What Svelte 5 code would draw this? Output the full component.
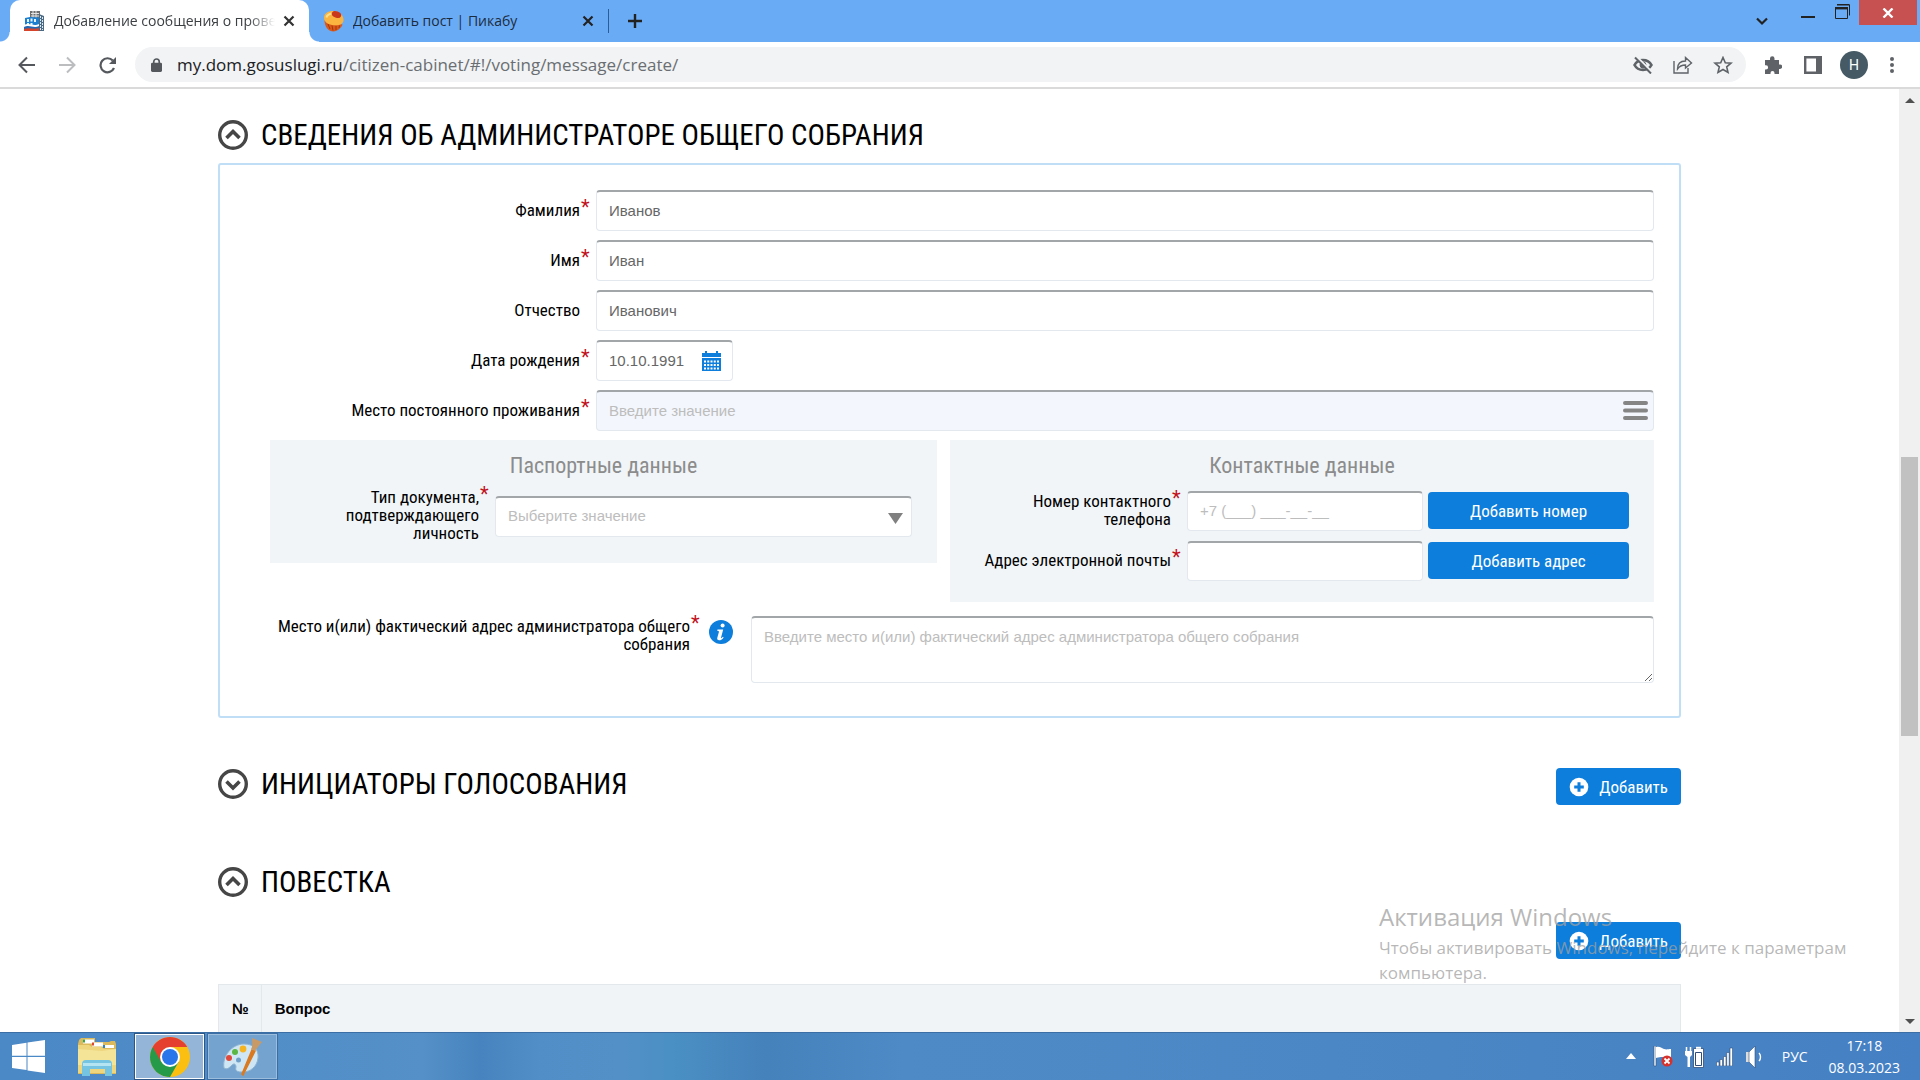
<script>
  const people = [
    { id: 'surname', label: 'Фамилия', value: 'Иванов', required: true },
    { id: 'name', label: 'Имя', value: 'Иван', required: true },
    { id: 'patronymic', label: 'Отчество', value: 'Иванович', required: false }
  ];
</script>

{#snippet toggleIcon(open)}
  <svg width="30" height="30" viewBox="0 0 30 30" fill="none" stroke="#464646">
    <circle cx="15" cy="15" r="13.3" stroke-width="3.4" />
    <path d={open ? 'M8.5 18 15 11.5 21.5 18' : 'M8.5 12.5 15 19 21.5 12.5'} stroke-width="3.6" />
  </svg>
{/snippet}

{#snippet fieldLabel(id, text, required)}
  <label class="label" for={id}>
    <span>{text}</span>
    <span class="star">{required ? '*' : ''}</span>
  </label>
{/snippet}

{#snippet addButton()}
  <button class="btn add">
    <svg width="20" height="20" viewBox="0 0 20 20">
      <circle cx="10" cy="10" r="9.3" fill="#fff" />
      <path d="M10 5.2v9.6M5.2 10h9.6" stroke="#0d7edb" stroke-width="3" />
    </svg>
    Добавить
  </button>
{/snippet}

<div class="screen">
  <header class="tabs">
    <div class="tab active">
      <svg width="22" height="22" viewBox="0 0 22 22">
        <path d="M6 1h10v7H6z" fill="#6f6f6f" />
        <path d="M7 3.500h8M7 6h8M9 1v7M12 1v7" stroke="#e4e4e4" />
        <path d="M15 4l5 2v15h-5z" fill="#4b6a84" />
        <path d="M16.500 6v14M18.500 7v13" stroke="#dce7ee" stroke-dasharray="2 1" />
        <path d="M1 8l5-1 9 .5V18H1z" fill="#1c7fd0" />
        <path d="M3 9h2v3H3zM6.500 8.500h2v3h-2zM10 9h2v3h-2zM3 13h2v2H3zM6.500 13h2v2h-2z" fill="#e8f3fb" />
        <path d="M0 15c6-3 9 2 15-1v4H0z" fill="#fff" />
        <path d="M0 17c6-3 9 2 15-1v3H0z" fill="#2468b2" />
        <path d="M0 19c6-2 9 1 15-1v3H0z" fill="#d6452b" />
      </svg>
      <button class="tab-title faded">Добавление сообщения о проведении</button>
      <button class="icon-btn" aria-label="Закрыть вкладку">
        <svg width="12" height="12" viewBox="0 0 12 12"><path d="M1.5 1.5l9 9M10.5 1.5l-9 9" stroke="#333" stroke-width="2.2" /></svg>
      </button>
    </div>
    <div class="tab">
      <svg width="22" height="22" viewBox="0 0 22 22">
        <path d="M1.500 10c0 7 4 11.500 9 11.500 4-.5 8-3.500 9-7z" fill="#d9591a" />
        <path d="M5 14l2 5M9 15.500l1 5M13 16v4M16.500 15.500l-.5 2.500" stroke="#a83608" />
        <path d="M1 7.500C1 3.500 5 1 10 1c6 0 11 4.500 10.500 9.500-.5 4.500-6 5.500-11.500 4.500-5-1-8-3.500-8-7.500z" fill="#fbb440" />
        <path d="M3.500 7.500c.5-2.500 2.500-3.500 5-4" stroke="#ffe08a" stroke-width="2" fill="none" />
        <ellipse cx="13.500" cy="4.500" rx="4.800" ry="3.200" transform="rotate(20 13.500 4.500)" fill="#c9381c" />
      </svg>
      <button class="tab-title">Добавить пост | Пикабу</button>
      <button class="icon-btn" aria-label="Закрыть вкладку">
        <svg width="12" height="12" viewBox="0 0 12 12"><path d="M1.5 1.5l9 9M10.5 1.5l-9 9" stroke="#222" stroke-width="2.2" /></svg>
      </button>
    </div>
    <span class="tab-sep"></span>
    <button class="icon-btn new-tab" aria-label="Новая вкладка">
      <svg width="16" height="16" viewBox="0 0 16 16"><path d="M8 1v14M1 8h14" stroke="#222" stroke-width="2.4" /></svg>
    </button>
    <div class="window-controls">
      <button class="icon-btn chevron" aria-label="Поиск вкладок">
        <svg width="12" height="9" viewBox="0 0 12 9"><path d="M1 1.5l5 5 5-5" fill="none" stroke="#222" stroke-width="2.2" /></svg>
      </button>
      <button class="icon-btn minimize" aria-label="Свернуть">
        <svg width="14" height="2"><path d="M0 1h14" stroke="#222" stroke-width="2" /></svg>
      </button>
      <button class="icon-btn restore" aria-label="Восстановить">
        <svg width="15" height="15" viewBox="0 0 15 15" fill="none" stroke="#222">
          <path d="M2 1h12.5v10.5" /><path d="M2 .5h12.5" /><path d="M.5 3.5h12v11H.5z" /><path d="M0 4.2h13" stroke-width="2.4" />
        </svg>
      </button>
      <button class="icon-btn close" aria-label="Закрыть">
        <svg width="12" height="10" viewBox="0 0 12 10"><path d="M1.5.5l9 9M10.5.5l-9 9" stroke="#fff" stroke-width="2.4" /></svg>
      </button>
    </div>
  </header>

  <nav class="toolbar">
    <button class="icon-btn" aria-label="Назад">
      <svg width="18" height="18" viewBox="0 0 18 18" fill="none" stroke="#55595d" stroke-width="2"><path d="M17 9H2M9 1.5L1.5 9 9 16.5" /></svg>
    </button>
    <button class="icon-btn" aria-label="Вперёд">
      <svg width="18" height="18" viewBox="0 0 18 18" fill="none" stroke="#bbbdbf" stroke-width="2"><path d="M1 9h15M9 1.5L16.5 9 9 16.5" /></svg>
    </button>
    <button class="icon-btn" aria-label="Обновить">
      <svg width="19" height="18" viewBox="0 0 19 18" fill="none" stroke="#55595d" stroke-width="2.2"><path d="M16 12a7 7 0 1 1-1.2-7.4" /><path d="M18 1v7h-7z" fill="#55595d" stroke="none" /></svg>
    </button>
    <div class="omnibox">
      <svg width="11" height="14" viewBox="0 0 12 15"><rect y="5" width="12" height="10" rx="1.5" fill="#55595d" /><path d="M3 6V4a3 3 0 0 1 6 0v2" fill="none" stroke="#55595d" stroke-width="1.8" /></svg>
      <a class="url" href="#top">my.dom.gosuslugi.ru<span>/citizen-cabinet/#!/voting/message/create/</span></a>
      <button class="icon-btn" aria-label="Сторонние файлы cookie">
        <svg width="20" height="18" viewBox="0 0 20 18" fill="none" stroke="#5f6368">
          <path d="M1.5 9C5 2.5 15 2.5 18.500 9 15 15.500 5 15.500 1.500 9z" stroke-width="2.6" />
          <circle cx="10" cy="9" r="3" fill="#5f6368" />
          <path d="M3.500 0.500L19 16" stroke="#f1f3f4" stroke-width="2" /><path d="M2 1.500l16 16" stroke-width="2" />
        </svg>
      </button>
      <button class="icon-btn" aria-label="Поделиться">
        <svg width="20" height="18" viewBox="0 0 20 18" fill="none" stroke="#5f6368" stroke-width="1.4">
          <path d="M1 5v12h14v-5" /><path d="M4.500 13c0-5 3-8 8-8V1.500L18.500 7l-6 5V9c-4 0-6 1-8 4z" />
        </svg>
      </button>
      <button class="icon-btn" aria-label="Добавить в закладки">
        <svg width="20" height="18" viewBox="0 0 20 18" fill="none" stroke="#5f6368" stroke-width="1.6">
          <path d="M10 1.500l2.300 5.200 5.700.5-4.300 3.700 1.300 5.500-5-2.900-5 2.900 1.300-5.500L2 7.200l5.700-.5z" />
        </svg>
      </button>
    </div>
    <button class="icon-btn" aria-label="Расширения">
      <svg width="18" height="18" viewBox="0 0 18 18" fill="#5f6368"><path d="M1 4h5V2.500a2.200 2.200 0 0 1 4.500 0V4H15v4.500h1a2.200 2.200 0 0 1 0 4.400h-1V18h-4.500v-1a2 2 0 0 0-4 0v1H1v-4.500h1a2.100 2.100 0 0 0 0-4.200H1z" /></svg>
    </button>
    <button class="icon-btn" aria-label="Боковая панель">
      <svg width="18" height="18" viewBox="0 0 18 18"><path d="M1.200 1.200h15.600v15.600H1.200z" fill="none" stroke="#5f6368" stroke-width="2.400" /><path d="M12 1h6v16h-6z" fill="#5f6368" /></svg>
    </button>
    <button class="avatar">Н</button>
    <button class="icon-btn" aria-label="Меню">
      <svg width="4" height="16" viewBox="0 0 4 16" fill="#5f6368"><circle cx="2" cy="2" r="2" /><circle cx="2" cy="8" r="2" /><circle cx="2" cy="14" r="2" /></svg>
    </button>
  </nav>

  <div class="viewport">
    <main id="top">
      <section>
        <h2>{@render toggleIcon(true)}Сведения об администраторе общего собрания</h2>
        <form class="panel">
          {#each people as p}
            <div class="row">
              {@render fieldLabel(p.id, p.label, p.required)}
              <input class="field" id={p.id} value={p.value} />
            </div>
          {/each}
          <div class="row">
            {@render fieldLabel('birth', 'Дата рождения', true)}
            <div class="with-icon date">
              <input class="field" id="birth" value="10.10.1991" />
              <svg class="inner-icon" width="19" height="20" viewBox="0 0 19 20">
                <path d="M0 2h19v4H0zM3 0h2v3H3zM14 0h2v3h-2zM0 7h19v13H0z" fill="#0d7edb" />
                <path d="M2 10.500h15M2 14h15M2 17.500h15" stroke="#fff" stroke-width="2" stroke-dasharray="2 1.250" />
              </svg>
            </div>
          </div>
          <div class="row">
            {@render fieldLabel('residence', 'Место постоянного проживания', true)}
            <div class="with-icon">
              <input class="field tinted" id="residence" placeholder="Введите значение" />
              <svg class="inner-icon menu" width="25" height="19" viewBox="0 0 25 19"><path d="M2 2h21M2 9.500h21M2 17h21" stroke="#858585" stroke-width="4" stroke-linecap="round" /></svg>
            </div>
          </div>

          <div class="groups">
            <div class="group passport">
              <h3>Паспортные данные</h3>
              <div class="group-row">
                {@render fieldLabel('doctype', 'Тип документа, подтверждающего личность', true)}
                <div class="with-icon">
                  <select class="field" id="doctype"><option>Выберите значение</option></select>
                  <svg class="inner-icon arrow" width="15" height="11" viewBox="0 0 15 11"><path d="M0 0h15L7.500 11z" fill="#808080" /></svg>
                </div>
              </div>
            </div>
            <div class="group contacts">
              <h3>Контактные данные</h3>
              <div class="group-row">
                {@render fieldLabel('phone', 'Номер контактного телефона', true)}
                <input class="field" id="phone" placeholder="+7 (___) ___-__-__" />
                <button type="button" class="btn">Добавить номер</button>
              </div>
              <div class="group-row">
                {@render fieldLabel('email', 'Адрес электронной почты', true)}
                <input class="field" id="email" />
                <button type="button" class="btn">Добавить адрес</button>
              </div>
            </div>
          </div>

          <div class="address">
            {@render fieldLabel('address', 'Место и(или) фактический адрес администратора общего собрания', true)}
            <svg class="info" width="24" height="24" viewBox="0 0 24 24">
              <circle cx="12" cy="12" r="12" fill="#0d7edb" />
              <circle cx="13.600" cy="5.500" r="2" fill="#fff" />
              <path d="M8.500 9.500h5.700l-2.200 8.200c-.2.800.7.500 2-.9l.6.600c-1.600 2.200-3 2.900-4.400 2.900-1.700 0-2.300-1-1.900-2.500l1.600-5.800c.2-.8 0-1.200-1.700-1.300z" fill="#fff" />
            </svg>
            <textarea class="field" id="address" placeholder="Введите место и(или) фактический адрес администратора общего собрания"></textarea>
          </div>
        </form>
      </section>

      <section class="heading-row">
        <h2>{@render toggleIcon(false)}Инициаторы голосования</h2>
        {@render addButton()}
      </section>

      <section class="agenda">
        <h2>{@render toggleIcon(true)}Повестка</h2>
        <div class="actions">{@render addButton()}</div>
        <table>
          <thead><tr><th class="num">№</th><th>Вопрос</th></tr></thead>
        </table>
      </section>
    </main>
    <div class="scrollbar" aria-hidden="true">
      <svg width="10" height="5"><path d="M0 5h10L5 0z" fill="#505050" /></svg>
      <div class="track"><span class="thumb"></span></div>
      <svg width="10" height="5"><path d="M0 0h10L5 5z" fill="#505050" /></svg>
    </div>
    <aside class="watermark">
      <p class="big">Активация Windows</p>
      <p>Чтобы активировать Windows, перейдите к параметрам компьютера.</p>
    </aside>
  </div>

  <footer class="taskbar">
    <button class="icon-btn start" aria-label="Пуск">
      <svg width="33" height="33" viewBox="0 0 33 33" fill="#fff"><path d="M0 5l14.500-2.200v13H0zM15.500 2.500L33 0v15.800H15.500zM0 17h14.500v13L0 28zM15.500 17H33v16l-17.500-2.600z" /></svg>
    </button>
    <button class="icon-btn explorer" aria-label="Проводник">
      <svg width="40" height="38" viewBox="0 0 40 38">
        <path d="M2 2l2-2h14v4h14l2-1h4l1 3v30H1V6z" fill="#dcb95a" />
        <path d="M6 1.500h11v4H6z" fill="#fff" /><path d="M6 1.500h2v3H6z" fill="#2fa84f" />
        <path d="M15 4.500h11v4H15z" fill="#fff" /><path d="M15 4.500h2v3h-2z" fill="#e0452f" />
        <path d="M26 7h11v3H26z" fill="#fff" /><path d="M26 7h2v3h-2z" fill="#2a86c9" />
        <path d="M1 7h11l3 2h9l3 2h12v24H1z" fill="#eed67e" />
        <path d="M1 11l24 2 14-2v16H1z" fill="#f6e9a4" opacity=".7" />
        <path d="M5 38V26a4 4 0 0 1 4-4h22a4 4 0 0 1 4 4v12h-7v-7H13v7z" fill="#74c4e2" />
        <path d="M6 25h28v3H6z" fill="#b4e4f2" />
      </svg>
    </button>
    <button class="task running" aria-label="Google Chrome">
      <svg width="40" height="40" viewBox="0 0 40 40">
        <circle cx="20" cy="20" r="20" fill="#fbbf12" />
        <path d="M20 20L2.700 10A20 20 0 0 0 20 40l8.600-15z" fill="#259a49" />
        <path d="M20 20V10h17.300A20 20 0 0 0 2.700 10l8.600 15z" fill="#e5402f" />
        <circle cx="20" cy="20" r="10" fill="#fff" /><circle cx="20" cy="20" r="8" fill="#2a75ea" />
      </svg>
    </button>
    <button class="task" aria-label="Paint">
      <svg width="40" height="38" viewBox="0 0 40 38">
        <path d="M1 30C-1 18 9 6 21 6c9 0 15 5 14 14-1 9-8 14-15 14-6 0-8-1-7-5 0-3-2-4-4-2-3 3-5 5-8 3z" fill="#cfe7f5" stroke="#8fb5d0" />
        <circle cx="6" cy="20" r="3" fill="#e04a3c" /><circle cx="12" cy="14" r="3" fill="#5cb643" /><circle cx="20" cy="11" r="3.400" fill="#f6b421" />
        <circle cx="15.500" cy="22" r="2.500" fill="#6f9fc9" />
        <path d="M29 12l3 1-12 24-1-1z" fill="#d97a22" stroke="#d97a22" stroke-width="1.500" />
        <path d="M29 0l10 4c-3 3-4 5-7 9l-4-2c2-3 1-7 1-11z" fill="#c99a66" />
      </svg>
    </button>
    <div class="tray">
      <svg width="10" height="7"><path d="M0 6h10L5 0z" fill="#fff" /></svg>
      <svg class="flag" width="20" height="22" viewBox="0 0 20 22">
        <path d="M1 0h2v20H1z" fill="#fff" stroke="#2f4f7a" stroke-width=".6" /><path d="M3 1c4-1 5 1 8 2 3 1 4 0 7 0v9c-4 1-5 0-8-1-3 0-4 0-7 1z" fill="#fff" />
        <circle cx="14" cy="15" r="5.500" fill="#d8302a" /><path d="M11.500 12.500l5 5M16.500 12.500l-5 5" stroke="#fff" stroke-width="1.800" />
      </svg>
      <svg width="19" height="22" viewBox="0 0 19 22">
        <path d="M1.500 1v4M5.500 1v4" stroke="#fff" stroke-width="1.500" /><path d="M0 5h7v4l-2 2v10H2.500V11L0 9z" fill="#fff" />
        <path d="M8.500 2.500h10v19h-10z" fill="#fff" stroke="#2f4f7a" stroke-width=".8" /><path d="M11 .8h5v2h-5z" fill="#fff" />
        <path d="M10.500 6.500h6v13h-6z" fill="none" stroke="#2f4f7a" />
      </svg>
      <svg width="17" height="19" viewBox="0 0 17 19" fill="#fff" stroke="#2f4f7a" stroke-width=".6"><path d="M.5 15h2.500v4H.5zM4 12.500h2.500V19H4zM7.500 9.500H10V19H7.500zM10.700 5.500h2.500V19h-2.500zM14 1h2.500v18H14z" /></svg>
      <svg width="18" height="22" viewBox="0 0 18 22"><path d="M1 6h3v10H1z" fill="#ddd" /><path d="M4 6l6-6v22l-6-6z" fill="#fff" stroke="#2f4f7a" stroke-width=".6" /><path d="M14 7c2 2 2 6 0 8" fill="none" stroke="#fff" stroke-width="1.400" /></svg>
      <span class="lang">РУС</span>
      <div class="clock"><span>17:18</span><span>08.03.2023</span></div>
    </div>
  </footer>
</div>

<style>
  :global(body) { margin: 0; background: #fff; }
  .screen { display: flex; flex-direction: column; height: 100vh; overflow: hidden; font-family: "Liberation Sans", Arial, sans-serif; color: #000; }
  button { border: 0; padding: 0; margin: 0; background: none; font: inherit; color: inherit; }
  svg { display: block; flex: none; }
  .icon-btn { display: flex; align-items: center; justify-content: center; flex: none; }

  .tabs { display: flex; height: 42px; background: #6aabf6; padding-left: 10px; font-family: "Open Sans", "Noto Sans", sans-serif; font-size: 14px; }
  .tab { display: flex; align-items: center; gap: 8px; width: 271px; padding: 0 14px; color: #1c2b3d; }
  .tab.active { position: relative; background: #fff; border-radius: 10px 10px 0 0; color: #3c4043; }
  .tab.active::before, .tab.active::after { content: ""; position: absolute; bottom: 0; width: 10px; height: 10px; }
  .tab.active::before { right: 100%; background: radial-gradient(circle at 0 0, transparent 9px, #fff 10px); }
  .tab.active::after { left: 100%; background: radial-gradient(circle at 100% 0, transparent 9px, #fff 10px); }
  .tab-title { flex: 1; min-width: 0; overflow: hidden; white-space: nowrap; text-align: left; padding-bottom: 2px; }
  .faded { mask-image: linear-gradient(to right, #000 88%, transparent); }
  .tab-sep { width: 1px; margin: 9px 0; background: #2d5c94; }
  .new-tab { padding: 0 18px; }
  .window-controls { display: flex; align-items: flex-start; margin-left: auto; padding-right: 3px; }
  .chevron { padding: 17px 15px 0; }
  .minimize { padding: 16px 18px; }
  .restore { padding: 4px 9px 4px 2px; }
  .close { width: 58px; height: 25px; background: #c75050; }

  .toolbar { display: flex; align-items: center; gap: 22px; height: 45px; padding: 0 26px 0 18px; border-bottom: 2px solid #dadada; background: #fff; }
  .omnibox { flex: 1; display: flex; align-items: center; gap: 20px; height: 35px; margin: 0 -4px; padding: 0 13px 0 16px; border-radius: 18px; background: #f1f3f4; }
  .url { flex: 1; margin-left: -5px; font-family: "Open Sans", "Noto Sans", sans-serif; font-size: 17px; color: #202124; text-decoration: none; }
  .url span { color: #6a6e72; }
  .avatar { width: 28px; height: 28px; margin-left: -4px; border-radius: 50%; background: #455a64; color: #fff; font: 14px Roboto, sans-serif; }

  .viewport { position: relative; flex: 1; display: flex; min-height: 0; }
  main { flex: 1; min-width: 0; overflow: hidden; padding: 26px 218px 0; }
  h2 { display: flex; align-items: center; gap: 13px; margin: 0; font: 400 29px/40px "Roboto Condensed", "Liberation Sans Narrow", Roboto, sans-serif; text-transform: uppercase; }
  .panel { display: flex; flex-direction: column; gap: 9px; margin-top: 8px; padding: 25px 25px 33px 50px; border: 2px solid #c0dff7; border-radius: 3px; }
  .row { display: grid; grid-template-columns: 326px minmax(0, 1fr); align-items: center; }
  .label { display: flex; justify-content: flex-end; padding-bottom: 2px; font: 400 17px/18px "Roboto Condensed", "Liberation Sans Narrow", Roboto, sans-serif; text-align: right; }
  .star { flex: none; width: 16px; padding-left: 1px; box-sizing: border-box; text-align: left; color: #c1121c; line-height: 12px; font-size: 20px; }
  .field { display: block; width: 100%; height: 41px; box-sizing: border-box; margin: 0; padding: 0 12px 2px; border: 1px solid #e2e8ed; border-top: 2px solid #a2a6a9; border-radius: 4px; background: #fff; color: #666; font: 15px "Liberation Sans", Arial, sans-serif; outline: 0; appearance: none; }
  .field::placeholder { color: #bdbdbd; opacity: 1; }
  select.field { color: #bdbdbd; }
  .tinted { background: #f3f6fc; }
  .with-icon { position: relative; }
  .date { width: 137px; }
  .inner-icon { position: absolute; right: 12px; top: 11px; pointer-events: none; }
  .menu { right: 6px; }
  .arrow { right: 9px; top: 17px; }

  .groups { display: grid; grid-template-columns: 667fr 704fr; gap: 13px; align-items: start; }
  .group { display: flex; flex-direction: column; gap: 10px; padding: 10px 25px; background: #f1f5f8; }
  h3 { margin: 0; font: 400 22px/31px "Roboto Condensed", "Liberation Sans Narrow", Roboto, sans-serif; text-align: center; color: #8c8c8c; }
  .group-row { display: grid; align-items: center; }
  .passport { gap: 7px; padding-bottom: 19px; }
  .passport .group-row { grid-template-columns: 200px minmax(0, 1fr); }
  .passport .label { padding-left: 40px; }
  .contacts { padding-bottom: 21px; }
  .contacts .group-row { grid-template-columns: 212px minmax(0, 1fr) 206px; }
  .contacts .field { height: 40px; }
  .contacts .btn { margin: 0 0 1px 5px; width: 201px; }
  .btn { height: 37px; border-radius: 4px; background: #0d7edb; color: #fff; font: 400 17px "Roboto Condensed", "Liberation Sans Narrow", Roboto, sans-serif; }
  .address { display: grid; grid-template-columns: 436px 45px minmax(0, 1fr); align-items: start; margin-top: 5px; }
  .address .label { padding-top: 1px; }
  .info { margin-top: 4px; margin-left: 3px; }
  textarea.field { height: 67px; padding-top: 10px; }

  .add { display: flex; align-items: center; gap: 10px; padding: 0 13px; }
  .heading-row { display: flex; align-items: center; justify-content: space-between; margin-top: 45px; }
  .heading-row .add { margin-top: 5px; }
  .agenda { margin-top: 57px; }
  .actions { display: flex; justify-content: flex-end; margin: 20px 0 25px; }
  table { width: 100%; border-collapse: collapse; background: #f0f4f7; font-size: 15px; }
  th { height: 60px; padding: 0 13px; border: 1px solid #e2e8ec; text-align: left; box-sizing: border-box; vertical-align: top; line-height: 48px; }
  .num { width: 42px; padding: 0 12px 0 13px; }

  .scrollbar { display: flex; flex-direction: column; align-items: center; width: 21px; padding: 9px 0 8px; box-sizing: border-box; background: #f0f0f0; }
  .track { flex: 1; display: grid; grid-template-rows: 355fr 279fr 284fr; width: 17px; }
  .thumb { grid-row: 2; background: #c1c1c1; }

  .watermark { position: absolute; right: 36px; bottom: 47px; width: 505px; font: 17px/25px "Open Sans", "Noto Sans", sans-serif; color: rgba(160, 160, 160, .75); pointer-events: none; }
  .watermark p { margin: 0; }
  .watermark .big { font-size: 24px; line-height: 36px; }

  .taskbar { display: flex; align-items: center; flex: none; height: 48px; box-sizing: border-box; padding: 0 20px 0 12px; border-top: 1px solid #3a6ea5; background: linear-gradient(to right, #4a88c6 0, #5590c8 22%, #4783be 25%, #518dc6 28%, #5490c8 32%, #4a90c4 35%, #4581bb 40%, #4e8bc6 47%, #4a86c4 75%, #4580c4 100%); color: #fff; font-family: "Open Sans", "Noto Sans", sans-serif; }
  .explorer { margin: 0 17px 0 32px; }
  .task { display: flex; align-items: center; justify-content: center; width: 71px; height: 47px; margin-right: 2px; border: 1px solid #3a6ea5; box-shadow: inset 0 0 0 1px #9dbddd; background: #75a3d0; }
  .running { border-color: #2c5685; box-shadow: inset 0 0 0 1px #fff; background: #94b4d8; }
  .tray { display: flex; align-items: center; gap: 12px; margin-left: auto; font-size: 14px; }
  .flag { margin-left: 5px; }
  .lang { margin: 0 9px 0 7px; }
  .clock { display: flex; flex-direction: column; align-items: center; line-height: 22px; }
</style>
